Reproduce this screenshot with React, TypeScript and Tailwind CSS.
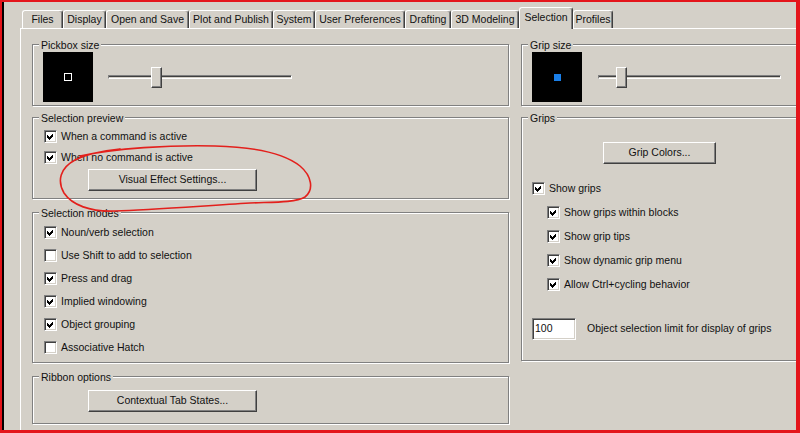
import React from "react";

const tabs = [
  { label: "Files", w: "w-[41px]" },
  { label: "Display", w: "w-[43px]" },
  { label: "Open and Save", w: "w-[83px]" },
  { label: "Plot and Publish", w: "w-[84px]" },
  { label: "System", w: "w-[42px]" },
  { label: "User Preferences", w: "w-[90px]" },
  { label: "Drafting", w: "w-[46px]" },
  { label: "3D Modeling", w: "w-[68px]" },
  { label: "Selection", w: "w-[54px]", active: true },
  { label: "Profiles", w: "w-[40px]" },
];

function Check({ checked }: { checked: boolean }) {
  return (
    <span className="flex h-[13px] w-[13px] shrink-0 items-center justify-center border border-t-[#808080] border-l-[#808080] border-b-white border-r-white bg-white shadow-[inset_1px_1px_0_#404040,inset_-1px_-1px_0_#d4d0c8]">
      {checked && (
        <svg width="7" height="7" viewBox="0 0 7 7" shapeRendering="crispEdges">
          <path d="M0 2L2 4L6 0V3L2 7L0 5Z" fill="#000" />
        </svg>
      )}
    </span>
  );
}

function CheckRow({ label, checked, className = "" }: { label: string; checked: boolean; className?: string }) {
  return (
    <div className={`flex h-[13px] items-center gap-[4px] ${className}`}>
      <Check checked={checked} />
      <span className="leading-[13px] whitespace-nowrap">{label}</span>
    </div>
  );
}

function Button({ children, className = "" }: { children: React.ReactNode; className?: string }) {
  return (
    <div
      className={`flex h-[22px] items-center justify-center border border-t-white border-l-white border-r-[#404040] border-b-[#404040] bg-[#d4d0c8] shadow-[inset_-1px_-1px_0_#808080] whitespace-nowrap ${className}`}
    >
      {children}
    </div>
  );
}

function Group({ title, className = "", children }: { title: string; className?: string; children?: React.ReactNode }) {
  return (
    <div className={`relative shrink-0 border border-[#808080] shadow-[inset_1px_1px_0_#fff,1px_1px_0_#fff] ${className}`}>
      <span className="absolute left-[6px] top-[-6px] bg-[#d4d0c8] px-[2px] leading-[13px] whitespace-nowrap">{title}</span>
      {children}
    </div>
  );
}

function Slider({ width, thumb }: { width: string; thumb: string }) {
  return (
    <div className={`relative flex h-[21px] items-center ${width}`}>
      <div className="h-[4px] w-full border border-t-[#808080] border-l-[#808080] border-b-white border-r-white bg-[#404040] shadow-[inset_0_-1px_0_#d4d0c8]" />
      <div className={`absolute top-0 h-[21px] w-[11px] border border-t-white border-l-white border-r-[#404040] border-b-[#404040] bg-[#d4d0c8] shadow-[inset_-1px_-1px_0_#808080] ${thumb}`} />
    </div>
  );
}

export default function App() {
  return (
    <div className="relative h-[433px] w-[800px] overflow-hidden border-t-2 border-l-2 border-r-4 border-b-[3px] border-[#e4151b] bg-[#d4d0c8] font-['Liberation_Sans',Arial,sans-serif] text-[10.5px] text-[#111]">
      <div className="flex h-full flex-col border-l-2 border-black">
        {/* tab strip */}
        <div className="mt-[5px] flex h-[21px] items-end pl-[18px]">
          {tabs.map((t) =>
            t.active ? (
              <div
                key={t.label}
                className={`relative z-10 mb-[-1px] flex h-[22px] items-center justify-center rounded-t-[3px] border-t border-l border-r border-t-white border-l-white border-r-[#404040] bg-[#d4d0c8] pb-[2px] shadow-[inset_-1px_0_0_#808080] whitespace-nowrap ${t.w}`}
              >
                {t.label}
              </div>
            ) : (
              <div
                key={t.label}
                className={`flex h-[18px] items-center justify-center rounded-t-[3px] border-t border-l border-r border-t-white border-l-white border-r-[#404040] shadow-[inset_-1px_0_0_#808080] whitespace-nowrap ${t.w}`}
              >
                {t.label}
              </div>
            )
          )}
        </div>

        {/* tab page */}
        <div className="ml-[16px] flex flex-1 gap-[12px] border-t border-l border-white pl-[11px] pt-[15px]">
          <div className="flex w-[477px] shrink-0 flex-col">
            <Group title="Pickbox size" className="h-[62px]">
              <div className="flex items-center pl-[10px] pt-[7px]">
                <div className="flex h-[50px] w-[50px] items-center justify-center bg-black">
                  <div className="h-[8px] w-[8px] border border-white" />
                </div>
                <div className="ml-[15px]">
                  <Slider width="w-[184px]" thumb="left-[43px]" />
                </div>
              </div>
            </Group>

            <Group title="Selection preview" className="mt-[11px] h-[82px]">
              <div className="flex flex-col pl-[11px] pt-[12px]">
                <CheckRow label="When a command is active" checked />
                <CheckRow label="When no command is active" checked className="mt-[8px]" />
                <Button className="ml-[44px] mt-[5px] w-[169px]">Visual Effect Settings...</Button>
              </div>
            </Group>

            <Group title="Selection modes" className="mt-[13px] h-[151px]">
              <div className="flex flex-col gap-[10px] pl-[11px] pt-[13px]">
                <CheckRow label="Noun/verb selection" checked />
                <CheckRow label="Use Shift to add to selection" checked={false} />
                <CheckRow label="Press and drag" checked />
                <CheckRow label="Implied windowing" checked />
                <CheckRow label="Object grouping" checked />
                <CheckRow label="Associative Hatch" checked={false} />
              </div>
            </Group>

            <Group title="Ribbon options" className="mt-[13px] h-[48px]">
              <div className="pl-[11px] pt-[13px]">
                <Button className="ml-[44px] w-[169px]">Contextual Tab States...</Button>
              </div>
            </Group>
          </div>

          <div className="flex w-[300px] shrink-0 flex-col">
            <Group title="Grip size" className="h-[62px]">
              <div className="flex items-center pl-[10px] pt-[7px]">
                <div className="flex h-[50px] w-[50px] items-center justify-center bg-black">
                  <div className="h-[7px] w-[7px] bg-[#1a7fe8]" />
                </div>
                <div className="ml-[16px]">
                  <Slider width="w-[183px]" thumb="left-[18px]" />
                </div>
              </div>
            </Group>

            <Group title="Grips" className="mt-[11px] h-[244px]">
              <div className="flex flex-col pl-[10px] pt-[24px]">
                <Button className="ml-[71px] w-[113px]">Grip Colors...</Button>
                <CheckRow label="Show grips" checked className="mt-[18px]" />
                <div className="ml-[15px] mt-[11px] flex flex-col gap-[11px]">
                  <CheckRow label="Show grips within blocks" checked />
                  <CheckRow label="Show grip tips" checked />
                  <CheckRow label="Show dynamic grip menu" checked />
                  <CheckRow label="Allow Ctrl+cycling behavior" checked />
                </div>
                <div className="mt-[27px] flex items-center">
                  <div className="flex h-[22px] w-[44px] items-center border border-t-[#808080] border-l-[#808080] border-b-white border-r-white bg-white pl-[2px] shadow-[inset_1px_1px_0_#404040,inset_-1px_-1px_0_#d4d0c8]">
                    100
                  </div>
                  <span className="ml-[11px] whitespace-nowrap">Object selection limit for display of grips</span>
                </div>
              </div>
            </Group>
          </div>
        </div>
      </div>

      {/* red pen annotation */}
      <svg className="pointer-events-none absolute left-[-2px] top-[-2px]" width="800" height="433" viewBox="0 0 800 433">
        <path
          d="M80,156 C115,148 170,145 215,146 C255,147 285,154 300,166 C312,176 314,190 305,197 C295,203 270,202 250,203 C200,206 150,210 115,211 C90,212 72,205 64,193 C57,181 60,168 75,160 C85,155 100,151 120,149"
          fill="none"
          stroke="#e3201c"
          strokeWidth="1.6"
          strokeLinecap="round"
        />
      </svg>
    </div>
  );
}
